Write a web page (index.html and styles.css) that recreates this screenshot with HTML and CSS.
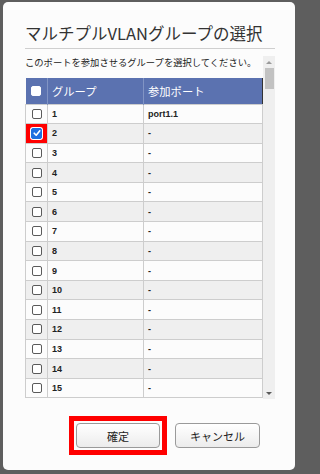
FILE: index.html
```html
<!DOCTYPE html>
<html lang="ja">
<head>
<meta charset="utf-8">
<link rel="stylesheet" href="styles.css">
</head>
<body>
<div class="dialog">
  <h1 class="title">マルチプルVLANグループの選択</h1>
  <div class="scroll">
    <div class="scroll-content">
      <p class="lead">このポートを参加させるグループを選択してください。</p>
      <table class="grid">
        <thead>
          <tr><th class="c-chk"><span class="cb cb-head"></span></th><th class="c-grp">グループ</th><th class="c-port">参加ポート</th></tr>
        </thead>
        <tbody>
          <tr><td class="c-chk"><span class="cb"></span></td><td>1</td><td>port1.1</td></tr>
          <tr><td class="c-chk hl"><span class="cb cb-on"><svg viewBox="0 0 10 10" width="10" height="10"><path d="M2.2 5.2 L4.2 7.2 L7.8 2.8" fill="none" stroke="#fff" stroke-width="1.6" stroke-linecap="round" stroke-linejoin="round"/></svg></span></td><td>2</td><td>-</td></tr>
          <tr><td class="c-chk"><span class="cb"></span></td><td>3</td><td>-</td></tr>
          <tr><td class="c-chk"><span class="cb"></span></td><td>4</td><td>-</td></tr>
          <tr><td class="c-chk"><span class="cb"></span></td><td>5</td><td>-</td></tr>
          <tr><td class="c-chk"><span class="cb"></span></td><td>6</td><td>-</td></tr>
          <tr><td class="c-chk"><span class="cb"></span></td><td>7</td><td>-</td></tr>
          <tr><td class="c-chk"><span class="cb"></span></td><td>8</td><td>-</td></tr>
          <tr><td class="c-chk"><span class="cb"></span></td><td>9</td><td>-</td></tr>
          <tr><td class="c-chk"><span class="cb"></span></td><td>10</td><td>-</td></tr>
          <tr><td class="c-chk"><span class="cb"></span></td><td>11</td><td>-</td></tr>
          <tr><td class="c-chk"><span class="cb"></span></td><td>12</td><td>-</td></tr>
          <tr><td class="c-chk"><span class="cb"></span></td><td>13</td><td>-</td></tr>
          <tr><td class="c-chk"><span class="cb"></span></td><td>14</td><td>-</td></tr>
          <tr><td class="c-chk"><span class="cb"></span></td><td>15</td><td>-</td></tr>
        </tbody>
      </table>
    </div>
    <div class="scrollbar">
      <span class="arrow-up"></span>
      <span class="thumb"></span>
      <span class="track-fill"></span>
      <span class="arrow-down"></span>
    </div>
  </div>
  <div class="actions">
    <div class="highlight"><button class="btn">確定</button></div>
    <button class="btn btn-cancel">キャンセル</button>
  </div>
</div>
</body>
</html>
```
FILE: styles.css
```css
html, body {
  margin: 0;
  height: 100%;
  background: #5e5e5e;
}
body {
  width: 300px;
  font-family: "Noto Sans CJK JP", "Noto Sans", sans-serif;
  overflow: hidden;
}
.dialog {
  margin: 2px 5px 4px 3px;
  width: 292px;
  height: 468px;
  background: #fcfcfc;
  border-radius: 5px;
  padding: 0 20px 0 22px;
  box-sizing: border-box;
  display: flex;
  flex-direction: column;
}
.title {
  margin: 0;
  padding-top: 20px;
  padding-bottom: 4px;
  font-size: 16.5px;
  line-height: 22px;
  font-weight: normal;
  color: #333;
  border-bottom: 1px solid #cfcfcf;
  white-space: nowrap;
}
.scroll {
  margin-top: 7px;
  height: 343px;
  display: flex;
  overflow: hidden;
}
.scroll-content {
  flex: 1;
  min-width: 0;
  overflow: hidden;
}
.lead {
  margin: 0;
  font-size: 9.3px;
  line-height: 13px;
  color: #222;
  white-space: nowrap;
}
.grid {
  margin-top: 9px;
  border-collapse: collapse;
  table-layout: fixed;
  width: 238px;
  border-right: 1px solid #333;
}
.grid th {
  background: #5b72b0;
  color: #fff;
  height: 26px;
  padding: 0 0 0 4px;
  font-size: 11.3px;
  font-weight: normal;
  text-align: left;
  border-left: 1px solid #8194c4;
  box-sizing: border-box;
}
.grid th.c-chk {
  border-left: none;
}
.c-chk {
  width: 22px;
}
.c-grp {
  width: 96px;
}
.grid td {
  height: 19.6px;
  padding: 0 0 0 4px;
  border: 1px solid #cdcdcd;
  font-family: "Liberation Sans", Arial, sans-serif;
  font-size: 9px;
  font-weight: bold;
  color: #222;
  box-sizing: border-box;
}
.grid tbody tr:nth-child(even) td {
  background: #efefef;
}
.grid td.c-chk,
.grid th.c-chk {
  padding: 0;
  text-align: center;
  line-height: 0;
}
.grid tbody tr td.hl {
  background: #ff0000;
}
.cb {
  display: inline-block;
  width: 10px;
  height: 10px;
  border: 1px solid #5a5a5a;
  border-radius: 2px;
  background: #fff;
  vertical-align: middle;
  box-sizing: border-box;
}
.cb-head {
  border-color: #fff;
}
.cb-on {
  width: 11px;
  height: 11px;
  background: #1f6fe0;
  border-color: #1f6fe0;
  box-shadow: 0 0 0 1px #fff;
}
.cb-on svg {
  display: block;
  margin: -0.5px 0 0 -0.5px;
}
.scrollbar {
  width: 12px;
  flex: none;
  background: #efefef;
  display: flex;
  flex-direction: column;
  align-items: center;
}
.arrow-up {
  margin-top: 5px;
  width: 0;
  height: 0;
  border-left: 3px solid transparent;
  border-right: 3px solid transparent;
  border-bottom: 3px solid #9a9a9a;
}
.thumb {
  margin-top: 4px;
  width: 9px;
  height: 21px;
  background: #c2c2c2;
}
.track-fill {
  flex: 1;
}
.arrow-down {
  margin-bottom: 4px;
  width: 0;
  height: 0;
  border-left: 3px solid transparent;
  border-right: 3px solid transparent;
  border-top: 3px solid #5a5a5a;
}
.actions {
  margin-top: 17px;
  display: flex;
  align-items: center;
  padding-left: 44px;
}
.highlight {
  border: 5px solid #ff0000;
  padding: 2px;
}
.btn {
  display: block;
  width: 84px;
  height: 25px;
  padding: 0;
  border: 1px solid #9a9a9a;
  border-radius: 4px;
  background: linear-gradient(#ffffff, #ececec);
  font-family: "Noto Sans CJK JP", sans-serif;
  font-size: 11px;
  color: #222;
}
.btn-cancel {
  margin-left: 8px;
  width: 85px;
}
```
